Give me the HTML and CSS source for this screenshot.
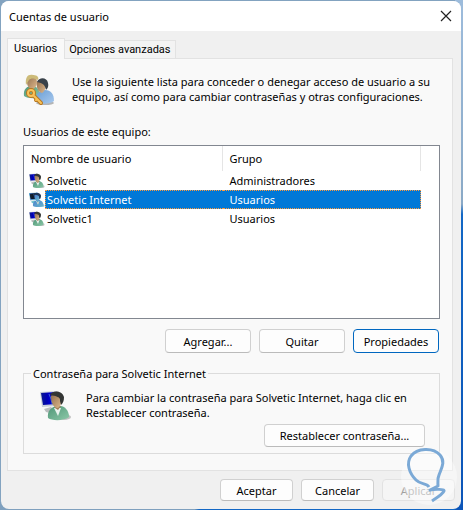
FILE: index.html
```html
<!DOCTYPE html>
<html lang="es">
<head>
    <meta charset="UTF-8">
    <meta name="viewport" content="width=device-width, initial-scale=1.0">
    <title>Cuentas de usuario</title>
    <link rel="stylesheet" href="styles.css">
</head>
<body>
    <svg class="symbols" aria-hidden="true">
        <defs>
            <linearGradient id="screen" x1="0" y1="0" x2="1" y2="0">
                <stop offset="0" stop-color="#0a1a90"/>
                <stop offset="0.4" stop-color="#0000b4"/>
                <stop offset="0.6" stop-color="#0000d0"/>
                <stop offset="1" stop-color="#000c78"/>
            </linearGradient>
            <linearGradient id="face" x1="0" y1="0" x2="1" y2="1">
                <stop offset="0" stop-color="#8f6c4c"/>
                <stop offset="1" stop-color="#dfb98c"/>
            </linearGradient>
            <linearGradient id="green" x1="0" y1="0" x2="1" y2="1">
                <stop offset="0" stop-color="#4f9677"/>
                <stop offset="1" stop-color="#8cc8a8"/>
            </linearGradient>
            <linearGradient id="blue" x1="0" y1="0" x2="1" y2="1">
                <stop offset="0" stop-color="#6b9fd4"/>
                <stop offset="1" stop-color="#a9c9ee"/>
            </linearGradient>
        </defs>
        <symbol id="user" viewBox="0 0 32 32">
            <ellipse cx="24" cy="27" rx="7" ry="3" fill="#a9a9a9" opacity=".7"/>
            <path d="M4 19l7-2 3 3-4 3-4-1z" fill="#b9bcbd"/>
            <path d="M0 2l17-1v15L2 17z" fill="#c8ced8"/>
            <path d="M1 3l15-1v12L3 15z" fill="url(#screen)"/>
            <path d="M9 4l2 5 1 5" fill="none" stroke="#3f62d8" stroke-width="1"/>
            <path d="M8 28c-1-7 3-11 9-12 7-1 12 4 12 11-5 4-17 4-21 1z" fill="url(#green)"/>
            <path d="M14 18l4 8 3-8z" fill="#e9f2ee"/>
            <path d="M14 14l1 4 3 2 3-4z" fill="#a57d56"/>
            <path d="M11 6c2-3 9-3 10 0 1 5 0 10-3 12-5 0-7-6-7-12z" fill="url(#face)"/>
            <path d="M10 5c2-5 12-5 14 2 0 4-1 6-3 8l-1-4c1-4-4-5-10-6z" fill="#343635"/>
        </symbol>
        <symbol id="users-key" viewBox="0 0 32 32">
            <ellipse cx="22" cy="29" rx="9" ry="2" fill="#b5b5b5"/>
            <path d="M1 22c-1-7 3-10 8-10 5 0 8 4 8 10-3 3-12 3-16 0z" fill="url(#green)"/>
            <ellipse cx="9" cy="8" rx="5" ry="7" fill="url(#face)"/>
            <path d="M3 11c-1-8 2-11 7-10 5 0 6 3 5 5-4-2-7-2-9 0z" fill="#cdbb79"/>
            <path d="M14 28c-2-8 2-12 8-12 6 0 9 4 9 11-4 3-12 4-17 1z" fill="url(#blue)"/>
            <path d="M14 8c2-3 8-3 9 0 0 6-1 9-4 11-4-1-6-6-5-11z" fill="url(#face)"/>
            <path d="M14 8c2-5 10-5 11 1 1 4-1 6-2 7-1-5-3-7-9-8z" fill="#394149"/>
            <g fill="none" stroke-linecap="round">
                <circle cx="8" cy="19" r="3" stroke="#b87820" stroke-width="4"/>
                <path d="M11 22l7 7M13 26l1-1" stroke="#b87820" stroke-width="4"/>
                <circle cx="8" cy="19" r="3" stroke="#f9c35a" stroke-width="2"/>
                <path d="M11 22l7 7M13 26l1-1" stroke="#f9c35a" stroke-width="2"/>
            </g>
        </symbol>
    </svg>

    <main class="dialog">
        <header class="title-bar">
            <h1>Cuentas de usuario</h1>
            <button class="close" type="button" aria-label="Cerrar">
                <svg width="12" height="12" viewBox="0 0 12 12"><path d="M1 1l10 10M11 1L1 11" fill="none" stroke="#222" stroke-width="1.2"/></svg>
            </button>
        </header>

        <div class="content">
            <div class="tabs" role="tablist">
                <button class="tab active" type="button" role="tab" aria-selected="true">Usuarios</button>
                <button class="tab" type="button" role="tab" aria-selected="false">Opciones avanzadas</button>
            </div>

            <section class="panel">
                <div class="intro">
                    <svg class="icon"><use href="#users-key"/></svg>
                    <p>Use la siguiente lista para conceder o denegar acceso de usuario a su<br>
                    equipo, así como para cambiar contraseñas y otras configuraciones.</p>
                </div>

                <h2 id="listLabel">Usuarios de este equipo:</h2>
                <div class="list">
                    <table aria-labelledby="listLabel">
                        <thead>
                            <tr><th>Nombre de usuario</th><th>Grupo</th></tr>
                        </thead>
                        <tbody>
                            <tr>
                                <td><div class="user"><svg class="small-icon"><use href="#user"/></svg><span class="name">Solvetic</span></div></td>
                                <td>Administradores</td>
                            </tr>
                            <tr class="selected">
                                <td><div class="user"><svg class="small-icon"><use href="#user"/></svg><span class="name">Solvetic Internet</span></div></td>
                                <td>Usuarios</td>
                            </tr>
                            <tr>
                                <td><div class="user"><svg class="small-icon"><use href="#user"/></svg><span class="name">Solvetic1</span></div></td>
                                <td>Usuarios</td>
                            </tr>
                        </tbody>
                    </table>
                </div>

                <div class="buttons">
                    <button class="btn" type="button">Agregar...</button>
                    <button class="btn" type="button">Quitar</button>
                    <button class="btn btn-default" type="button">Propiedades</button>
                </div>

                <fieldset class="password">
                    <legend>Contraseña para Solvetic Internet</legend>
                    <div class="password-info">
                        <svg class="icon"><use href="#user"/></svg>
                        <p>Para cambiar la contraseña para Solvetic Internet, haga clic en<br>
                        Restablecer contraseña.</p>
                    </div>
                    <button class="btn btn-wide" type="button">Restablecer contraseña...</button>
                </fieldset>
            </section>
        </div>

        <footer class="footer">
            <button class="btn" type="button">Aceptar</button>
            <button class="btn" type="button">Cancelar</button>
            <button class="btn" type="button" disabled>Aplicar</button>
        </footer>
    </main>

    <svg class="watermark" viewBox="0 0 58 58" aria-hidden="true">
        <circle cx="29" cy="29" r="28" fill="#fff" fill-opacity=".4"/>
        <path d="M29 39C27 35 21 37 16 32C9 25 6 15 11 8C17 0 33-1 40 7C46 14 41 21 39 27C37 31 38 35 38 38L30 42C35 41 45 41 44 43C43 46 35 51 32 53" fill="none" stroke="#7ba9d6" stroke-width="3" stroke-linejoin="round"/>
    </svg>
</body>
</html>
```

FILE: styles.css
```css
* {
    box-sizing: border-box;
}

body {
    margin: 0;
    min-height: 100vh;
    padding: 1px 2px 1px 1px;
    display: flex;
    background:
        linear-gradient(#9dbcdc 0, #8aa9c6 40%, #1267c5 42%, #0c55b8 100%) right / 8px 100% no-repeat,
        linear-gradient(90deg, #7fa0be 42%, #1267c5 43%) bottom / 100% 8px no-repeat,
        #83a3c0;
    font-family: "Noto Sans", sans-serif;
    font-size: 11px;
    line-height: 15px;
    color: #000;
}

h1, h2, p {
    margin: 0;
    font-size: 11px;
    font-weight: normal;
}

button {
    font: inherit;
    color: inherit;
}

.symbols {
    position: absolute;
    width: 0;
    height: 0;
}

.dialog {
    flex: 1;
    min-width: 0;
    display: flex;
    flex-direction: column;
    background: #f0f0f0;
    border-radius: 8px;
    overflow: hidden;
}

/* title bar */
.title-bar {
    display: flex;
    justify-content: space-between;
    align-items: center;
    height: 30px;
    padding: 0 8px;
    background: #fff;
}

.close {
    display: flex;
    padding: 1px;
    border: none;
    background: none;
}

/* tabs */
.content {
    flex: 1;
    display: flex;
    flex-direction: column;
    padding: 7px 8px 0 6px;
}

.tabs {
    display: flex;
    align-items: flex-end;
}

.tab {
    height: 18px;
    padding: 0 4px;
    border: 1px solid #e2e2e2;
    border-left: none;
    border-bottom: none;
    background: #f3f3f3;
    font-family: Roboto, sans-serif;
    white-space: nowrap;
}

.tab.active {
    height: 21px;
    margin-bottom: -1px;
    padding: 0 7px 2px 6px;
    border-left: 1px solid #e2e2e2;
    background: #f9f9f9;
    z-index: 1;
}

.panel {
    flex: 1;
    padding: 15px 12px 16px 15px;
    border: 1px solid #e2e2e2;
    background: #f9f9f9;
}

.intro {
    display: flex;
    gap: 17px;
    height: 50px;
    white-space: nowrap;
}

.icon {
    flex: none;
    width: 32px;
    height: 32px;
}

/* user list */
.list {
    height: 174px;
    margin-top: 6px;
    border: 1px solid #828790;
    background: #fff;
}

table {
    width: 397px;
    max-width: 100%;
    table-layout: fixed;
    border-collapse: separate;
    border-spacing: 0;
}

th {
    height: 25px;
    padding: 0 7px;
    border-right: 1px solid #e5e5e5;
    font-weight: normal;
    text-align: left;
}

td {
    height: 19px;
    padding: 0 7px;
}

td:first-child {
    padding: 0 0 0 5px;
}

.user {
    display: flex;
    align-items: center;
}

.small-icon {
    width: 16px;
    height: 16px;
}

.name {
    flex: 1;
    padding: 2px;
}

.selected .name,
.selected td:last-child {
    background: #0078d7;
    color: #fff;
    border: 1px dotted #ff9a3c;
    border-width: 1px 0;
}

.selected .name {
    padding: 1px 2px 1px 1px;
    border-left-width: 1px;
}

.selected td:last-child {
    border-right-width: 1px;
}

.selected .small-icon {
    filter: sepia(1) hue-rotate(175deg) saturate(3) brightness(.8);
}

/* buttons */
.buttons {
    display: flex;
    justify-content: flex-end;
    gap: 8px;
    margin: 10px 1px 13px 0;
}

.btn {
    width: 86px;
    height: 24px;
    padding: 0;
    border: 1px solid #d0d0d0;
    border-bottom-color: #bbb;
    border-radius: 4px;
    background: #fdfdfd;
}

.btn-default {
    border-color: #0067c0;
}

.btn-wide {
    width: 161px;
}

.btn:disabled {
    border-color: #e2e2e2;
    background: #f5f5f5;
    color: #a0a0a0;
}

/* password group */
.password {
    display: flex;
    flex-direction: column;
    min-width: 0;
    height: 88px;
    margin: 0;
    padding: 9px 14px 6px 16px;
    border: 1px solid #dcdcdc;
}

.password legend {
    margin-left: -9px;
    padding: 0 2px;
}

.password-info {
    display: flex;
    gap: 14px;
    white-space: nowrap;
}

.password .btn {
    align-self: flex-end;
    margin-top: 2px;
}

.footer {
    display: flex;
    justify-content: flex-end;
    gap: 8px;
    padding: 8px 6px;
}

.footer .btn {
    width: 73px;
    height: 22px;
}

.watermark {
    position: absolute;
    right: 5px;
    bottom: 4px;
    width: 58px;
    height: 58px;
    overflow: visible;
    pointer-events: none;
}
```
